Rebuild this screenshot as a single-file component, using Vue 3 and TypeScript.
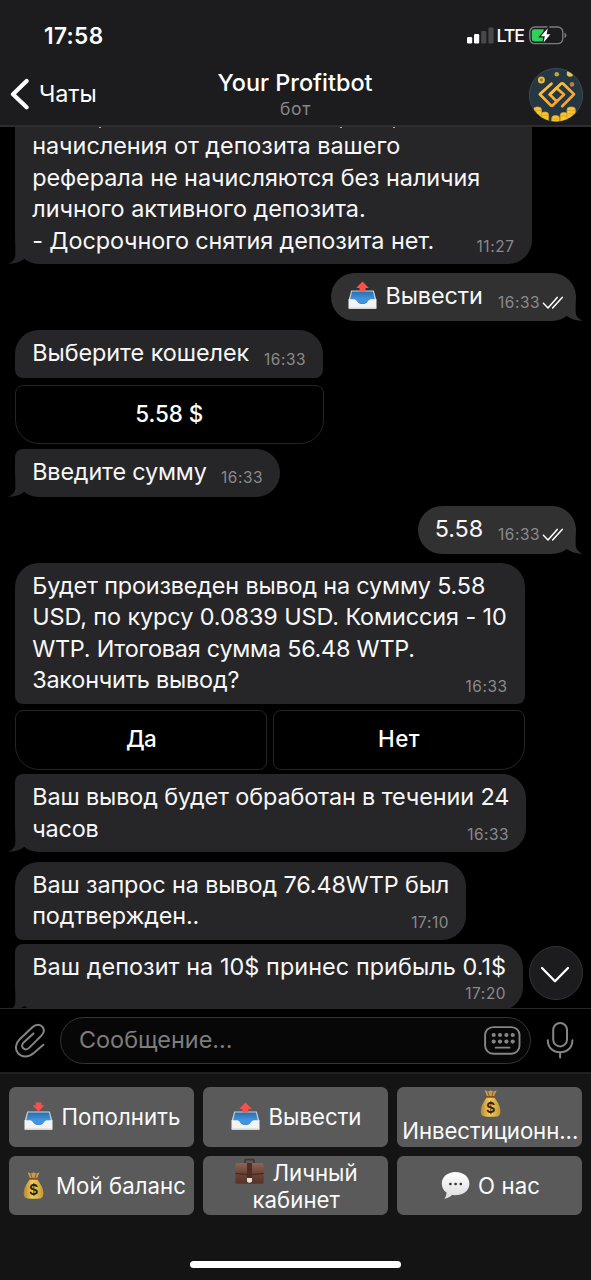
<script setup lang="ts">
interface Line { text: string; width: number }
interface Message {
  id: string
  side: 'in' | 'out'
  lines: Line[]
  time: string
  width: number
  height: number
  gap: number
  shape: string
  tail?: boolean
  icon?: string
  buttons?: Line[]
}
interface KeyRow { icon?: string; text?: string; width?: number }

const messages: Message[] = [
  {
    id: 'rules', side: 'in', time: '11:27', width: 516.5, height: 137, gap: 0, shape: 'last clipped', tail: true,
    lines: [
      { text: 'начисления от депозита вашего', width: 368 },
      { text: 'реферала не начисляются без наличия', width: 448 },
      { text: 'личного активного депозита.', width: 333.5 },
      { text: '- Досрочного снятия депозита нет.', width: 402 },
    ],
  },
  {
    id: 'withdraw', side: 'out', time: '16:33', width: 244.5, height: 48, gap: 9, shape: 'round', tail: true, icon: 'tray-up',
    lines: [{ text: 'Вывести', width: 97.5 }],
  },
  {
    id: 'wallet', side: 'in', time: '16:33', width: 308, height: 48, gap: 9, shape: 'first',
    lines: [{ text: 'Выберите кошелек', width: 217 }],
    buttons: [{ text: '5.58 $', width: 68 }],
  },
  {
    id: 'amount', side: 'in', time: '16:33', width: 265, height: 48, gap: 4.5, shape: 'last', tail: true,
    lines: [{ text: 'Введите сумму', width: 174.5 }],
  },
  {
    id: 'value', side: 'out', time: '16:33', width: 158, height: 48, gap: 9, shape: 'round', tail: true,
    lines: [{ text: '5.58', width: 48.5 }],
  },
  {
    id: 'confirm', side: 'in', time: '16:33', width: 509.5, height: 141, gap: 9, shape: 'first',
    lines: [
      { text: 'Будет произведен вывод на сумму 5.58', width: 453 },
      { text: 'USD, по курсу 0.0839 USD. Комиссия - 10', width: 474.5 },
      { text: 'WTP. Итоговая сумма 56.48 WTP.', width: 382.5 },
      { text: 'Закончить вывод?', width: 207 },
    ],
    buttons: [{ text: 'Да', width: 30 }, { text: 'Нет', width: 42 }],
  },
  {
    id: 'pending', side: 'in', time: '16:33', width: 510.5, height: 78, gap: 4.5, shape: 'last', tail: true,
    lines: [
      { text: 'Ваш вывод будет обработан в течении 24', width: 477 },
      { text: 'часов', width: 66.5 },
    ],
  },
  {
    id: 'approved', side: 'in', time: '17:10', width: 451, height: 78, gap: 9.5, shape: 'first rounded-end',
    lines: [
      { text: 'Ваш запрос на вывод 76.48WTP был', width: 417 },
      { text: 'подтвержден..', width: 167 },
    ],
  },
  {
    id: 'profit', side: 'in', time: '17:20', width: 508, height: 67, gap: 4.5, shape: 'last', tail: true,
    lines: [{ text: 'Ваш депозит на 10$ принес прибыль 0.1$', width: 474 }],
  },
]

const timeWidths: Record<string, number> = { '11:27': 38, '17:10': 38, '17:20': 41, '16:33': 42 }

const keys: KeyRow[][] = [
  [{ icon: 'tray-down', text: 'Пополнить', width: 119 }],
  [{ icon: 'tray-up', text: 'Вывести', width: 93 }],
  [{ icon: 'bag' }, { text: 'Инвестиционн...', width: 176 }],
  [{ icon: 'bag', text: 'Мой баланс', width: 130 }],
  [{ icon: 'case', text: 'Личный', width: 85 }, { text: 'кабинет', width: 87.5 }],
  [{ icon: 'speech', text: 'О нас', width: 62 }],
]

const px = (n: number) => `${n}px`

// Spreads the tracking of a label so that it fills the given width.
const vFit = {
  mounted(el: HTMLElement, binding: { value: number | undefined }) {
    const count = (el.textContent ?? '').trim().length
    if (!binding.value || !count) return
    const natural = el.getBoundingClientRect().width
    el.style.letterSpacing = `${(binding.value - natural) / count}px`
  },
}
</script>

<template>
  <div class="phone">
    <svg class="defs" width="0" height="0">
      <defs>
        <linearGradient id="blue" x1="0" y1="0" x2="0" y2="1">
          <stop offset="0" stop-color="#2a6dad" /><stop offset="1" stop-color="#4ba3ee" />
        </linearGradient>
        <linearGradient id="gold" x1="0" y1="0" x2="1" y2="0">
          <stop offset="0" stop-color="#b9872a" /><stop offset=".45" stop-color="#f3cf5c" /><stop offset="1" stop-color="#c8962f" />
        </linearGradient>
        <linearGradient id="leather" x1="0" y1="0" x2="0" y2="1">
          <stop offset="0" stop-color="#8c6555" /><stop offset=".5" stop-color="#6b4436" /><stop offset="1" stop-color="#54332a" />
        </linearGradient>
        <linearGradient id="cloud" x1="0" y1="0" x2="0" y2="1">
          <stop offset="0" stop-color="#ffffff" /><stop offset="1" stop-color="#dcdcdc" />
        </linearGradient>
        <linearGradient id="brand" x1="0" y1="0" x2="1" y2="1">
          <stop offset="0" stop-color="#ffc83a" /><stop offset="1" stop-color="#f39a2d" />
        </linearGradient>
        <symbol id="tray" viewBox="0 0 29 29">
          <path d="M3.2 9.6H25.8L28.4 19H.6Z" fill="#c9d3dc" />
          <path d="M4 10.4H25L27.4 21H1.6Z" fill="url(#blue)" />
          <path d="M.5 18.2H6.6C9.2 18.2 9.2 23 14.5 23S19.8 18.2 22.4 18.2H28.5V26.8Q28.5 28 27.3 28H1.7Q.5 28 .5 26.8Z" fill="#f3f3f4" />
          <path d="M6.6 18.2C9.2 18.2 9.2 23 14.5 23S19.8 18.2 22.4 18.2L22 17.4H7Z" fill="#3f95e2" />
          <path d="M.6 26.5H28.4V27Q28.4 28 27.3 28H1.7Q.6 28 .6 27Z" fill="#d4d5d8" />
        </symbol>
        <symbol id="tray-up" viewBox="0 0 29 29">
          <use href="#tray" />
          <path d="M14.5 .4L20.4 6.4Q20.6 7 19.8 7H17.5V10.6H11.5V7H9.2Q8.4 7 8.6 6.4Z" fill="#f4524d" />
        </symbol>
        <symbol id="tray-down" viewBox="0 0 29 29">
          <use href="#tray" />
          <path d="M11.8 .6H17.4V3.2H19.4Q20.2 3.4 19.8 4.1L14.6 9.6L9.2 4.1Q8.8 3.4 9.6 3.2H11.8Z" fill="#f4524d" />
        </symbol>
        <symbol id="bag" viewBox="0 0 29 29">
          <path d="M8.6 1.2L12.4 2.4L14.6 1.2L17 2.4L20.6 1.4L17.6 8.2H11.4Z" fill="#c79b50" />
          <path d="M11.6 2.6L13.3 7.5M17.2 2.8L15.8 7.5" stroke="#7e5d2e" stroke-width="1" />
          <path d="M11 8H18C21 12 24.6 17 24.4 22.5C24.2 26.3 22.6 27.6 19 27.7H10C6.4 27.6 4.9 26.3 4.8 22.5C4.6 17 8.2 12 11 8Z" fill="url(#gold)" />
          <path d="M10.8 7.8H18.2" stroke="#8c4b28" stroke-width="1.7" stroke-linecap="round" />
          <text x="14.6" y="24.3" text-anchor="middle" class="dollar">$</text>
        </symbol>
        <symbol id="case" viewBox="0 0 29 29">
          <path d="M10 6V2.6Q10 1.7 11 1.7H18Q19 1.7 19 2.6V6" fill="none" stroke="#49332c" stroke-width="1.7" />
          <rect x=".4" y="5" width="28.2" height="20.8" rx="1.6" fill="url(#leather)" />
          <path d="M.5 15.5Q14.5 17.8 28.5 15.5" stroke="#40251d" stroke-width="1" fill="none" />
          <path d="M12 5H17V21H12Z" fill="#4c2e25" />
          <path d="M12 20H17V23.5Q14.5 26 12 23.5Z" fill="#e6e1da" />
        </symbol>
        <symbol id="speech" viewBox="0 0 29 29">
          <path d="M14.5 1C6.4 1 .8 6 .8 12.7C.8 16.3 2.6 19.5 5.5 21.6C5.6 24.2 4.6 26.4 3.3 27.7C6.6 27.6 9.4 25.6 11 24.1C20.7 25.2 28.4 20.5 28.4 12.7C28.4 6 22.6 1 14.5 1Z" fill="url(#cloud)" />
          <circle cx="9.4" cy="13" r="1.35" fill="#333" /><circle cx="14.6" cy="13" r="1.35" fill="#333" /><circle cx="19.8" cy="13" r="1.35" fill="#333" />
        </symbol>
      </defs>
    </svg>

    <header class="top">
      <div class="status">
        <span v-fit="59.5" class="clock">17:58</span>
        <div class="indicators">
          <svg width="27" height="17" viewBox="0 0 27 17">
            <rect x="0" y="10" width="5.2" height="6.5" rx="1.3" fill="#fff" />
            <rect x="7" y="7" width="5.2" height="9.5" rx="1.3" fill="#fff" />
            <rect x="14.2" y="4" width="5.2" height="12.5" rx="1.3" fill="#48484a" />
            <rect x="21.4" y="0.5" width="5.2" height="16" rx="1.3" fill="#48484a" />
          </svg>
          <span v-fit="27.5" class="network">LTE</span>
          <svg class="battery" width="38" height="19" viewBox="0 0 38 19">
            <rect x=".8" y="1" width="33" height="16.6" rx="5" fill="none" stroke="#7c7c7f" stroke-width="1.4" />
            <path d="M5.2 3.2H14.6V15.4H5.2Q2.8 15.4 2.8 13V5.6Q2.8 3.2 5.2 3.2Z" fill="#30d158" />
            <path d="M35.5 6.5Q37.4 7.4 37.4 9.3T35.5 12.1Z" fill="#7c7c7f" />
            <path d="M18.8 2.2L11.8 10.3H15.8L14.6 16.5L21.4 8.2H17.6Z" fill="#fff" stroke="#1c1c1e" stroke-width="2.4" paint-order="stroke" />
          </svg>
        </div>
      </div>
      <div class="nav">
        <div class="back">
          <svg width="20" height="32" viewBox="0 0 20 32"><path d="M16.6 3L3 16.2L16.6 29.3" fill="none" stroke="#fff" stroke-width="4.2" stroke-linecap="round" stroke-linejoin="round" /></svg>
          <span v-fit="57.5">Чаты</span>
        </div>
        <div class="heading">
          <h1 v-fit="155">Your Profitbot</h1>
          <p v-fit="31">бот</p>
        </div>
        <svg class="avatar" width="54" height="54" viewBox="0 0 54 54">
          <clipPath id="disc"><circle cx="27" cy="27" r="26.4" /></clipPath>
          <circle cx="27" cy="27" r="26.6" fill="#263744" stroke="#4a5760" stroke-width=".7" />
          <g clip-path="url(#disc)">
            <circle cx="12.4" cy="12" r="3.5" fill="#e3bd42" /><circle cx="12.4" cy="12" r="1.4" fill="#8f7430" />
            <circle cx="27.8" cy="6.2" r="2.3" fill="#bda444" />
            <circle cx="41" cy="5.5" r="3.2" fill="#e5c74a" />
            <circle cx="43" cy="16.4" r="2.3" fill="#c37a43" />
            <g fill="none" stroke="url(#brand)" stroke-width="2.7" stroke-linejoin="round" stroke-linecap="round">
              <path d="M22.5 15.7L10.8 26.3L21.7 37.3Q22.8 38.1 23.9 37.3L35 26.5L27.5 20L20.8 26.5L27.5 33.2" />
              <path d="M20.8 26.5L32 15.7Q33.1 14.9 34.2 15.7L45 26.3L33.2 38.3" />
            </g>
            <g fill="#f6c52f" stroke="#d6992a" stroke-width=".7">
              <rect x="4.5" y="39" width="8" height="15" rx="3" /><rect x="12" y="44" width="7.6" height="12" rx="3" />
              <rect x="22.7" y="47.6" width="7.8" height="8" rx="3" /><rect x="31.2" y="44.5" width="7.6" height="12" rx="3" />
              <rect x="38" y="39" width="8.4" height="16" rx="3" />
              <path d="M5 42.5H12M12.4 47.4H19.2M23 51H30.2M31.6 48H38.4M38.4 42.5H46M38.4 46H46" />
            </g>
          </g>
        </svg>
      </div>
    </header>

    <main class="chat">
      <div class="descenders"><i /><i /><i /></div>
      <section v-for="m in messages" :key="m.id" class="entry" :class="m.side" :style="{ marginTop: px(m.gap) }">
        <div class="bubble" :class="[m.shape, { single: m.height === 48 }]" :style="{ width: px(m.width), height: px(m.height) }">
          <svg v-if="m.tail" class="tail" width="32" height="26" viewBox="0 0 32 26"><path d="M7.3 0V17C7.3 21.5 4 24.4 0 25.6C6 26.3 12.5 24 17 20.5L26 10V0Z" /></svg>
          <div class="body">
            <svg v-if="m.icon" class="emoji" width="29" height="29"><use :href="'#' + m.icon" /></svg>
            <div class="lines">
              <div v-for="l in m.lines" :key="l.text" class="line"><span v-fit="l.width">{{ l.text }}</span></div>
            </div>
          </div>
          <div class="meta">
            <span v-fit="timeWidths[m.time]" class="time">{{ m.time }}</span>
            <svg v-if="m.side === 'out'" width="22" height="14" viewBox="0 0 22 14"><path d="M1.4 7.2L6 12L15.2 1.4M10.6 12L20.2 1.4" fill="none" stroke="#fff" stroke-width="1.5" stroke-linecap="round" stroke-linejoin="round" /></svg>
          </div>
        </div>
        <div v-if="m.buttons" class="inline-keys" :style="{ width: px(m.width + 0.5) }">
          <button v-for="b in m.buttons" :key="b.text"><span v-fit="b.width">{{ b.text }}</span></button>
        </div>
      </section>
      <button class="scroll">
        <svg width="30" height="18" viewBox="0 0 30 18"><path d="M2 2L15 15.3L28 2" fill="none" stroke="#fff" stroke-width="2.3" stroke-linecap="round" stroke-linejoin="round" /></svg>
      </button>
    </main>

    <div class="composer">
      <svg class="clip" width="32" height="36" viewBox="14 1022 32 36"><path d="M43.4 1044.8L33.5 1053.3C28.3 1057.8 21.8 1057.4 18.2 1053.4C14.8 1049.5 15.2 1043.6 19.5 1039.5L32.6 1027C36.2 1023.8 40.4 1024 42.5 1026.8C44.6 1029.6 44.2 1032.8 41.4 1035.6L29.4 1047.6C27.3 1049.6 24.8 1049.8 23.2 1048.3C21.6 1046.8 21.7 1044.4 23.7 1042.4L33.4 1033.4" fill="none" stroke="#858587" stroke-width="2" stroke-linecap="round" /></svg>
      <div class="field">
        <span v-fit="153.5">Сообщение...</span>
        <svg width="37" height="29" viewBox="0 0 37 29" fill="#858587">
          <rect x="1.1" y="1.1" width="34.4" height="26.6" rx="8" fill="none" stroke="#858587" stroke-width="1.9" />
          <g v-for="x in [9.7, 16, 22.4, 28.7]" :key="x"><circle :cx="x" cy="9" r="2.1" /><circle :cx="x" cy="15.6" r="2.1" /></g>
          <rect x="10.8" y="20.7" width="15.6" height="1.9" rx=".9" />
        </svg>
      </div>
      <svg class="mic" width="28" height="38" viewBox="0 0 28 38" fill="none" stroke="#858587" stroke-width="2" stroke-linecap="round">
        <rect x="7.2" y="2" width="13.8" height="23.4" rx="6.9" /><path d="M1.8 19.2C1.8 26.5 7 31.3 14.1 31.3S26.4 26.5 26.4 19.2M14.1 31.3V36.5" />
      </svg>
    </div>

    <footer class="keyboard">
      <div class="grid">
        <button v-for="(k, i) in keys" :key="i" class="key">
          <div v-for="(r, j) in k" :key="j" class="key-row">
            <svg v-if="r.icon" class="emoji" width="29" height="29"><use :href="'#' + r.icon" /></svg>
            <span v-if="r.text" v-fit="r.width">{{ r.text }}</span>
          </div>
        </button>
      </div>
      <div class="home" />
    </footer>
  </div>
</template>

<style>
body { background: #000; }
</style>

<style scoped>
.phone { width: 591px; height: 1280px; overflow: hidden; display: flex; flex-direction: column; background: #000; color: #fff; font-family: Inter, "Noto Sans", sans-serif; font-size: 23.4px; }
.defs { position: absolute; }
span, h1, p { display: inline-block; white-space: nowrap; margin: 0; }
svg { display: block; flex: none; }
button { font: inherit; color: inherit; padding: 0; margin: 0; border: 0; box-sizing: border-box; }
.dollar { font: 600 14.5px Inter, sans-serif; fill: #33230b; }

.top { height: 127px; flex: none; box-sizing: border-box; background: #1c1c1e; border-bottom: 2px solid #2d2d30; position: relative; z-index: 2; }
.status { height: 62px; display: flex; justify-content: space-between; padding: 0 24px 0 44px; }
.clock { font-size: 22.6px; font-weight: 600; line-height: 28px; margin-top: 21.5px; }
.indicators { display: flex; align-items: flex-start; padding-top: 27px; }
.network { font-size: 17.8px; font-weight: 500; line-height: 22px; margin: -2.5px 0 0 3px; }
.battery { margin: -1px 0 0 5px; }
.nav { height: 63px; display: grid; grid-template-columns: 1fr auto 1fr; align-items: start; }
.back { display: flex; padding: 16px 0 0 10px; line-height: 30px; }
.back span { margin: 1px 0 0 9px; }
.heading { display: flex; flex-direction: column; align-items: center; padding-top: 6px; }
.heading h1 { font-size: 23.4px; font-weight: 500; line-height: 30px; margin-left: -1px; }
.heading p { font-size: 17.6px; line-height: 22px; color: #88888b; margin-top: -.5px; }
.avatar { justify-self: end; margin: 6px 8px 0 0; }

.chat { height: 881px; flex: none; overflow: hidden; position: relative; }
.entry { display: flex; flex-direction: column; align-items: flex-start; padding: 0 15.5px 0 15px; }
.entry.out { align-items: flex-end; }
.bubble { position: relative; display: grid; box-sizing: border-box; background: #262628; padding: 7.3px 17px 0 17.2px; }
.out .bubble { background: #313131; padding-right: 11.5px; }
.bubble > .body, .bubble > .meta { grid-area: 1 / 1; position: relative; z-index: 1; }
.first { border-radius: 24px 24px 8px 8px; }
.rounded-end { border-radius: 24px 24px 24px 8px; }
.last { border-radius: 8px 24px 24px 24px; }
.round { border-radius: 24px; }
.clipped { border-radius: 0 0 24px 24px; padding-top: 3.4px; }
.body { display: flex; align-items: flex-start; }
.out .body .emoji { margin: .5px 8px 0 .2px; }
.line { height: 31.4px; line-height: 31.4px; color: #f7f7f7; }
.meta { align-self: end; justify-self: end; display: flex; align-items: center; gap: 2px; height: 20px; margin-bottom: 6.8px; }
.single .meta { margin-bottom: 8.4px; }
.time { font-size: 15.4px; line-height: 20px; color: #8a8a8c; }
.tail { position: absolute; left: -7.3px; bottom: 0; fill: #262628; }
.out .tail { left: auto; right: -7.3px; transform: scaleX(-1); fill: #313131; }
.inline-keys { display: flex; gap: 6px; margin-top: 6.5px; height: 59.5px; }
.inline-keys button { flex: 1; background: #000; border: 1.5px solid #252527; border-radius: 8px; font-size: 22.4px; font-weight: 500; line-height: 30px; padding-bottom: 1.5px; }
.inline-keys button:first-child { border-bottom-left-radius: 24px; }
.inline-keys button:last-child { border-bottom-right-radius: 24px; }
.descenders { position: absolute; z-index: 1; top: 0; left: 99px; display: flex; }
.descenders i { width: 2px; height: 1px; background: #b4b4b4; }
.descenders i:nth-child(2) { margin-left: 239px; }
.descenders i:nth-child(3) { margin-left: 51px; }
.scroll { position: absolute; z-index: 2; right: 8.5px; bottom: 8.5px; width: 54px; height: 54px; border-radius: 50%; background: #1c1c1e; border: 1px solid #343437; display: flex; align-items: center; justify-content: center; padding: 4px 2px 0 0; }

.composer { height: 66px; flex: none; box-sizing: border-box; border-top: 1.5px solid #29292b; border-bottom: 2px solid #1f1f21; display: flex; align-items: flex-start; padding: 8px 17px 0 14px; background: #000; }
.clip { margin-top: 5px; }
.field { width: 471px; height: 47px; margin-left: 14px; box-sizing: border-box; border: 1.5px solid #343436; border-radius: 24px; background: #070707; display: flex; align-items: center; justify-content: space-between; padding: 0 9.5px 0 18px; color: #7d7d7f; line-height: 30px; }
.field span { margin-top: -1px; }
.mic { margin: 4px 0 0 15px; }

.keyboard { flex: 1; background: #141414; display: flex; flex-direction: column; align-items: center; }
.grid { width: 573px; margin-top: 13px; display: grid; grid-template-columns: repeat(3, 1fr); gap: 9px; }
.key { height: 59.7px; background: #5a5a5a; border-radius: 6.5px; display: flex; flex-direction: column; align-items: center; justify-content: center; font-size: 22.2px; }
.key-row { height: 27px; display: flex; align-items: center; justify-content: center; gap: 8.5px; line-height: 27px; color: #fafafa; margin-left: 1.5px; }
.home { width: 211px; height: 7.5px; border-radius: 4px; background: #fff; margin-top: 45.3px; }
</style>
